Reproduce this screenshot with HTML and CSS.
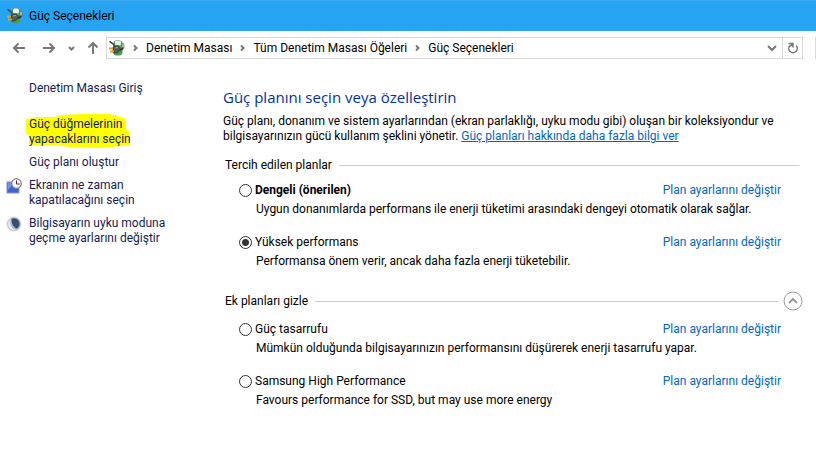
FILE: index.html
```
<!DOCTYPE html>
<html lang="tr">
<head>
    <meta charset="UTF-8">
    <meta name="viewport" content="width=device-width, initial-scale=1.0">
    <title>Güç Seçenekleri</title>
    <link rel="stylesheet" href="styles.css">
</head>
<body>
    <!-- power plug icon, used in the title and the address bar -->
    <svg class="defs" width="0" height="0" aria-hidden="true">
        <symbol id="power" viewBox="0 0 16 16">
            <rect x="5" y="1" width="8" height="14" rx="2" fill="#2fae3a" stroke="#6d8b70"/>
            <rect x="6" y="1" width="6" height="4" rx="1" fill="#e4f5e2"/>
            <path d="M7 0h4v1H7z" fill="#bbb"/>
            <path d="M10.500 5v4" stroke="#6fdc62" stroke-width="2"/>
            <path d="M1 1c0 3 4 1 4 5" fill="none" stroke="#444" stroke-width="1.5"/>
            <path d="M10 10c4 0 5-2 4-6" fill="none" stroke="#333" stroke-width="1.5"/>
            <path d="M4 7l4-1c3 0 4 2 3 4s-3 3-5 3H4z" fill="#585858" stroke="#222" stroke-width=".6"/>
            <path d="M6 8l3-.5" stroke="#aaa"/>
            <path d="M0 8.500h4M1 11.500h4" stroke="#d8a51c" stroke-width="1.800"/>
            <path d="M13 3l2 1v4l-2-1z" fill="#ddd" stroke="#555" stroke-width=".6"/>
        </symbol>
    </svg>

    <header class="titlebar">
        <svg class="icon"><use href="#power"/></svg>
        <span>Güç Seçenekleri</span>
    </header>

    <nav class="toolbar">
        <div class="nav-buttons">
            <button type="button" aria-label="Geri">
                <svg width="14" height="12" viewBox="0 0 14 12"><path d="M13 6H2M6.500 1.500L2 6l4.500 4.500"/></svg>
            </button>
            <button type="button" aria-label="İleri">
                <svg width="14" height="12" viewBox="0 0 14 12"><path d="M1 6h11M7.500 1.500L12 6l-4.500 4.500"/></svg>
            </button>
            <button type="button" class="small" aria-label="Son konumlar">
                <svg width="7" height="5" viewBox="0 0 7 5"><path d="M1 1l2.500 2.500L6 1"/></svg>
            </button>
            <button type="button" aria-label="Yukarı">
                <svg width="12" height="14" viewBox="0 0 12 14"><path d="M6 13V2M1.500 6.500L6 2l4.500 4.500"/></svg>
            </button>
        </div>
        <div class="address">
            <svg class="icon"><use href="#power"/></svg>
            <svg class="sep" width="5" height="8" viewBox="0 0 5 8"><path d="M1 1.500L3.500 4 1 6.500"/></svg>
            <a href="#">Denetim Masası</a>
            <svg class="sep" width="5" height="8" viewBox="0 0 5 8"><path d="M1 1.500L3.500 4 1 6.500"/></svg>
            <a href="#">Tüm Denetim Masası Öğeleri</a>
            <svg class="sep" width="5" height="8" viewBox="0 0 5 8"><path d="M1 1.500L3.500 4 1 6.500"/></svg>
            <a href="#">Güç Seçenekleri</a>
            <button type="button" class="history" aria-label="Önceki konumlar">
                <svg width="10" height="7" viewBox="0 0 10 7"><path d="M1 1l4 4 4-4"/></svg>
            </button>
            <button type="button" class="refresh" aria-label="Yenile">
                <svg width="12" height="12" viewBox="0 0 12 12"><path d="M9 3.500a4.200 4.200 0 1 1-6 0"/><path d="M1.500 1.500H6v4M6 1.500L3 4.500"/></svg>
            </button>
        </div>
        <div class="search"></div>
    </nav>

    <div class="content">
        <aside class="sidebar">
            <a class="home" href="#">Denetim Masası Giriş</a>
            <a class="marked" href="#">
                <svg class="marker" width="106" height="36" viewBox="0 0 106 36"><path d="M1 6l6-1 5-1h18l6-2 20-1h28l12 3 5 2v11l4 1v14l-8 1-22 2-30-1-18-2H4V22l-3-1z" fill="#ff0"/></svg>
                Güç düğmelerinin<br>yapacaklarını seçin
            </a>
            <a href="#">Güç planı oluştur</a>
            <a class="with-icon" href="#">
                <svg class="icon" viewBox="0 0 16 16">
                    <rect x="1" y="4" width="12" height="11" fill="#3f63d2" stroke="#8a98c4"/>
                    <path d="M2 5h6L2 12z" fill="#7595ea"/>
                    <circle cx="10.500" cy="5.500" r="4.800" fill="#f5f5f5" stroke="#858585" stroke-width="1.300"/>
                    <path d="M10.500 2.500v3.500h3" fill="none" stroke="#333"/>
                </svg>
                <span>Ekranın ne zaman<br>kapatılacağını seçin</span>
            </a>
            <a class="with-icon" href="#">
                <svg class="icon" viewBox="0 0 16 16">
                    <circle cx="8" cy="8" r="7.500" fill="#d3d7df"/>
                    <circle cx="8" cy="8" r="6.500" fill="#a9b6cc"/>
                    <path d="M5.500 3C9 .5 14 4 13.500 8.500c-.5 2.500-1.500 3.500-3 4C9 12.500 5 8 5.500 3z" fill="#3c4e70"/>
                    <path d="M5 2.500C1 5 1 11 5 13.500c2 1 4 1 5 .5-4-1-7-6-5-11.500z" fill="#e3e8f0"/>
                </svg>
                <span>Bilgisayarın uyku moduna<br>geçme ayarlarını değiştir</span>
            </a>
        </aside>

        <main class="main">
            <h1>Güç planını seçin veya özelleştirin</h1>
            <p class="intro">Güç planı, donanım ve sistem ayarlarından (ekran parlaklığı, uyku modu gibi) oluşan bir koleksiyondur ve<br>bilgisayarınızın gücü kullanım şeklini yönetir. <a href="#">Güç planları hakkında daha fazla bilgi ver</a></p>

            <section>
                <div class="section-head">
                    <h2>Tercih edilen planlar</h2>
                    <span class="line"></span>
                </div>
                <div class="plan">
                    <input type="radio" name="plan" id="balanced">
                    <label class="bold" for="balanced">Dengeli (önerilen)</label>
                    <a href="#">Plan ayarlarını değiştir</a>
                    <p>Uygun donanımlarda performans ile enerji tüketimi arasındaki dengeyi otomatik olarak sağlar.</p>
                </div>
                <div class="plan">
                    <input type="radio" name="plan" id="high" checked>
                    <label for="high">Yüksek performans</label>
                    <a href="#">Plan ayarlarını değiştir</a>
                    <p>Performansa önem verir, ancak daha fazla enerji tüketebilir.</p>
                </div>
            </section>

            <section class="extra">
                <div class="section-head">
                    <h2>Ek planları gizle</h2>
                    <span class="line"></span>
                    <button type="button" aria-label="Ek planları gizle">
                        <svg width="20" height="20" viewBox="0 0 20 20"><circle cx="10" cy="10" r="9"/><path d="M6 12l4-4 4 4"/></svg>
                    </button>
                </div>
                <div class="plan">
                    <input type="radio" name="plan" id="saver">
                    <label for="saver">Güç tasarrufu</label>
                    <a href="#">Plan ayarlarını değiştir</a>
                    <p>Mümkün olduğunda bilgisayarınızın performansını düşürerek enerji tasarrufu yapar.</p>
                </div>
                <div class="plan">
                    <input type="radio" name="plan" id="samsung">
                    <label for="samsung">Samsung High Performance</label>
                    <a href="#">Plan ayarlarını değiştir</a>
                    <p>Favours performance for SSD, but may use more energy</p>
                </div>
            </section>
        </main>
    </div>
</body>
</html>
```

FILE: styles.css
```
* {
    box-sizing: border-box;
}
body {
    margin: 0;
    background: #fff;
    color: #000;
    font-family: "Segoe UI", Roboto, sans-serif;
    font-size: 12px;
    line-height: 15px;
    overflow-x: hidden;
}
a {
    color: #0066cc;
    text-decoration: none;
}
button {
    display: flex;
    align-items: center;
    justify-content: center;
    padding: 0;
    border: none;
    background: none;
}
button svg, .sep {
    fill: none;
    stroke: #777;
    stroke-width: 2;
}
h1, h2, p {
    margin: 0;
    font-weight: normal;
}
.defs {
    position: absolute;
}
.icon {
    flex: none;
    width: 16px;
    height: 16px;
}

/* title bar */
.titlebar {
    display: flex;
    align-items: center;
    gap: 6px;
    height: 31px;
    padding-left: 7px;
    background: #26a4f2;
    border-top: 1px solid #3aa9ee;
}

/* navigation and address bar */
.toolbar {
    display: flex;
    align-items: center;
    height: 34px;
}
.nav-buttons {
    display: flex;
    align-items: center;
    justify-content: space-between;
    width: 106px;
    padding: 0 7px 0 12px;
}
.nav-buttons .small {
    margin: 0 -4px;
}
.address {
    display: flex;
    flex: 1;
    align-items: center;
    height: 22px;
    padding-left: 2px;
    border: 1px solid #d9d9d9;
    white-space: nowrap;
}
.address a {
    color: #000;
}
.address .sep {
    margin: 0 8px;
}
.address .history {
    width: 20px;
    height: 20px;
    margin-left: auto;
}
.address .refresh {
    width: 20px;
    height: 20px;
    border-left: 1px solid #d9d9d9;
}
.address .refresh svg {
    stroke-width: 1.5;
}
.search {
    width: 1px;
    height: 22px;
    margin-left: 12px;
    background: #d9d9d9;
}

/* page body */
.content {
    display: flex;
}
.sidebar {
    display: flex;
    flex: none;
    flex-direction: column;
    align-items: flex-start;
    gap: 8px;
    width: 223px;
    padding: 16px 0 0 29px;
}
.sidebar a {
    color: #151c55;
}
.sidebar .home {
    margin-bottom: 13px;
}
.marked {
    position: relative;
    isolation: isolate;
}
.marker {
    position: absolute;
    top: -4px;
    left: -4px;
    z-index: -1;
}
.with-icon {
    display: flex;
    gap: 7px;
    margin-left: -23px;
}

.main {
    flex: 1;
    min-width: 0;
    padding: 22px 13px 0 0;
}
h1 {
    color: #003399;
    font-family: "Segoe UI", "Open Sans", sans-serif;
    font-size: 15px;
    line-height: 20px;
}
.intro {
    margin-top: 7px;
    white-space: nowrap;
}
.intro a {
    text-decoration: underline;
}
.section-head {
    display: flex;
    align-items: center;
    gap: 7px;
    height: 20px;
    margin: 11px 0 8px;
    padding-left: 2px;
}
h2 {
    font-size: 12px;
}
.line {
    flex: 1;
    height: 1px;
    margin-right: 4px;
    background: #ccc;
}
.section-head button {
    margin-left: -6px;
}
.section-head button svg {
    stroke: #999;
    stroke-width: 1;
}
.section-head button path {
    stroke-width: 2;
}
.extra .section-head {
    margin: 22px 0 11px;
}

.plan {
    display: grid;
    grid-template-columns: 13px 1fr auto;
    column-gap: 3px;
    row-gap: 4px;
    align-items: center;
    margin-bottom: 18px;
    padding: 0 22px 0 16px;
}
.plan p {
    grid-column: 2 / 4;
    padding-left: 1px;
    white-space: nowrap;
}
.plan label {
    justify-self: start;
}
.plan .bold {
    font-weight: bold;
}
.plan input {
    appearance: none;
    width: 13px;
    height: 13px;
    margin: 0;
    border: 1px solid #333;
    border-radius: 50%;
    background: #fff;
}
.plan input:checked {
    background: radial-gradient(circle, #333 3px, #fff 4px);
}
```
